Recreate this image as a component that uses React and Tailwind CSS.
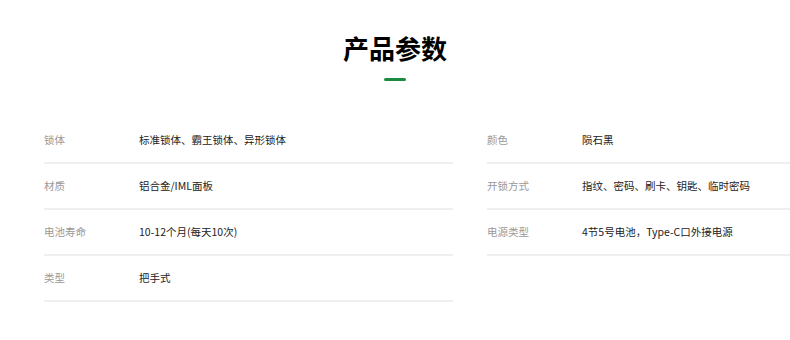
const left = [
  { label: "锁体", value: "标准锁体、霸王锁体、异形锁体" },
  { label: "材质", value: "铝合金/IML面板" },
  { label: "电池寿命", value: "10-12个月(每天10次)" },
  { label: "类型", value: "把手式" },
];

const right = [
  { label: "颜色", value: "陨石黑" },
  { label: "开锁方式", value: "指纹、密码、刷卡、钥匙、临时密码" },
  { label: "电源类型", value: "4节5号电池，Type-C口外接电源" },
];

function Row({ label, value }) {
  return (
    <div className="flex h-[46px] items-center border-b-2 border-[#efefef] text-[10.5px]">
      <span className="w-[95px] shrink-0 text-[#999]">{label}</span>
      <span className="text-[#222]">{value}</span>
    </div>
  );
}

export default function App() {
  return (
    <div
      className="h-[340px] w-[790px] overflow-hidden bg-white"
      style={{ fontFamily: '"Noto Sans CJK SC", "Noto Sans", sans-serif' }}
    >
      <div className="flex flex-col items-center pt-[30px]">
        <h2 className="text-[26px] font-bold leading-[36px] text-black">产品参数</h2>
        <div className="mt-[12px] h-[3px] w-[22px] rounded-full bg-[#1b8a42]" />
      </div>
      <div className="mt-[37px] flex gap-[34px] pl-[44px]">
        <div className="w-[409px] shrink-0">
          {left.map((r) => (
            <Row key={r.label} {...r} />
          ))}
        </div>
        <div className="w-[320px] shrink-0">
          {right.map((r) => (
            <Row key={r.label} {...r} />
          ))}
        </div>
      </div>
    </div>
  );
}
